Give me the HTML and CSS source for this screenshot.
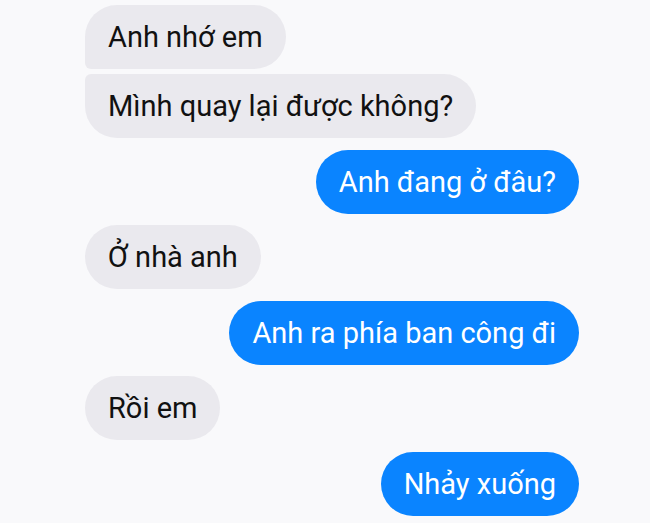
FILE: index.html
```html
<!DOCTYPE html>
<html lang="vi">
<head>
<meta charset="utf-8">
<link rel="stylesheet" href="styles.css">
</head>
<body>
<div class="chat">
  <div class="msg in first">Anh nhớ em</div>
  <div class="msg in last grouped">Mình quay lại được không?</div>
  <div class="msg out">Anh đang ở đâu?</div>
  <div class="msg in">Ở nhà anh</div>
  <div class="msg out">Anh ra phía ban công đi</div>
  <div class="msg in">Rồi em</div>
  <div class="msg out">Nhảy xuống</div>
</div>
</body>
</html>
```
FILE: styles.css
```css
html, body {
  margin: 0;
  padding: 0;
  background: #f9f9fb;
}
.chat {
  display: flex;
  flex-direction: column;
  padding: 5px 71px 0 85px;
  font-family: Roboto, "Noto Sans", sans-serif;
}
.msg {
  height: 64px;
  line-height: 64px;
  padding: 0 23px;
  font-size: 29px;
  border-radius: 32px;
  white-space: nowrap;
  margin-top: 11.5px;
}
.msg:first-child { margin-top: 0; }
.in {
  align-self: flex-start;
  background: #eae9ee;
  color: #111111;
}
.out {
  align-self: flex-end;
  background: #0a84ff;
  color: #ffffff;
}
.in.first { border-bottom-left-radius: 6px; }
.in.last { border-top-left-radius: 6px; }
.grouped { margin-top: 5px; }
```
